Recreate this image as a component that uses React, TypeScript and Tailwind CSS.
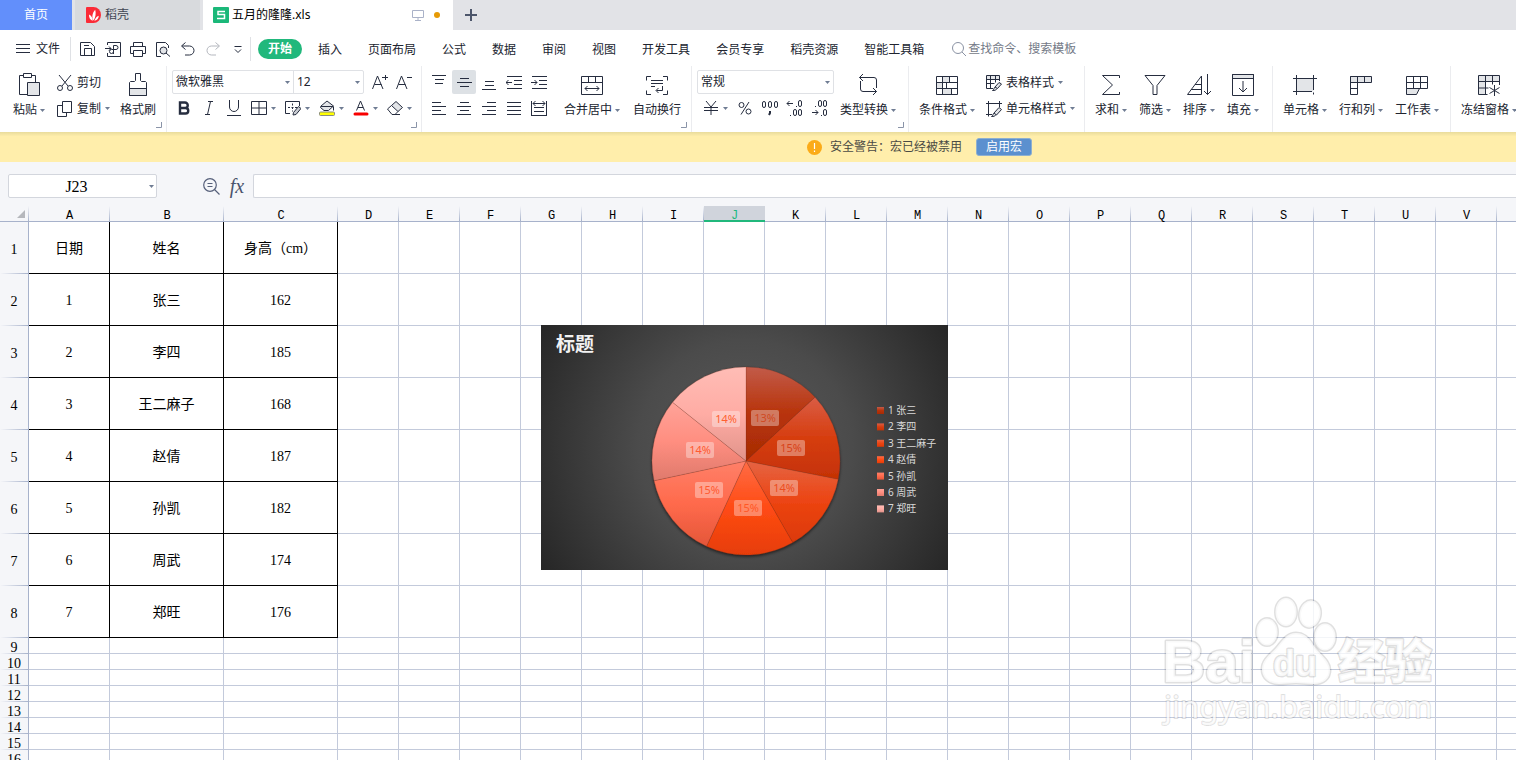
import type { ReactNode } from "react";
import clsx from "clsx";

const INK = "#262d3f";
const SHADE = "#e3e5e8";

function Icon({
  w = 16,
  h = 16,
  color = INK,
  children,
}: {
  w?: number;
  h?: number;
  color?: string;
  children: ReactNode;
}) {
  return (
    <svg
      width={w}
      height={h}
      viewBox={`0 0 ${w} ${h}`}
      fill="none"
      stroke={color}
      className="shrink-0"
      aria-hidden="true"
    >
      {children}
    </svg>
  );
}

function Caret() {
  return (
    <svg width="5" height="3" viewBox="0 0 5 3" className="shrink-0" aria-hidden="true">
      <path d="M0 0h5L2.5 3z" fill="#6f7c93" />
    </svg>
  );
}

function BigButton({
  label,
  icon,
  caret = true,
  className,
}: {
  label: string;
  icon: ReactNode;
  caret?: boolean;
  className: string;
}) {
  return (
    <button className={clsx("flex shrink-0 flex-col items-center whitespace-nowrap", className)}>
      <span className="flex h-7 items-center">
        <Icon w={24} h={24}>
          {icon}
        </Icon>
      </span>
      <span className="flex h-6 items-center gap-[3px]">
        {label}
        {caret && <Caret />}
      </span>
    </button>
  );
}

function Tool({
  label,
  active,
  className,
  children,
}: {
  label: string;
  active?: boolean;
  className: string;
  children: ReactNode;
}) {
  return (
    <button
      aria-label={label}
      className={clsx(
        "flex h-6 shrink-0 items-center justify-center rounded-xs",
        active && "bg-[#dde1e5]",
        className
      )}
    >
      {children}
    </button>
  );
}

function DropTool({ label, children }: { label: string; children: ReactNode }) {
  return (
    <button aria-label={label} className="flex h-6 w-[34px] shrink-0 items-center gap-1 pl-1">
      {children}
      <Caret />
    </button>
  );
}

function TextTool({ label, icon, caret }: { label: string; icon: ReactNode; caret?: boolean }) {
  return (
    <button className="flex h-6 items-center gap-1 pt-px whitespace-nowrap">
      <Icon>{icon}</Icon>
      {label}
      {caret && <Caret />}
    </button>
  );
}

function Group({
  corner,
  className,
  children,
}: {
  corner?: boolean;
  className: string;
  children: ReactNode;
}) {
  return (
    <div className={clsx("relative flex shrink-0 border-r border-[#ebecef] pt-1", className)}>
      {children}
      {corner && (
        <svg width="6" height="6" className="absolute right-1 bottom-1" aria-hidden="true">
          <path d="M5.5 0v5.5H0" fill="none" stroke="#8a94a8" />
        </svg>
      )}
    </div>
  );
}

function SelectBox({
  label,
  options,
  className,
}: {
  label: string;
  options: string[];
  className: string;
}) {
  return (
    <span className={clsx("relative flex items-center", className)}>
      <select
        aria-label={label}
        className="h-full w-full appearance-none bg-transparent pl-[3px] outline-none"
      >
        {options.map((o) => (
          <option key={o}>{o}</option>
        ))}
      </select>
      <span className="pointer-events-none absolute right-[3px]">
        <Caret />
      </span>
    </span>
  );
}

function TabBar() {
  return (
    <div className="flex h-[30px] shrink-0 bg-[#e2e3e7]">
      <button className="w-[72px] bg-[#628ffb] text-white">首页</button>
      <button className="ml-[3px] flex w-[125px] items-center gap-1 bg-[#d8dadd] pl-[11px] text-[#3f4552]">
        <svg width="15" height="16" viewBox="0 0 15 16" aria-hidden="true">
          <path d="M1 0h6.5a7.5 8 0 0 1 0 16H1a1 1 0 0 1-1-1V1a1 1 0 0 1 1-1z" fill="#fb2b37" />
          <path
            d="M7.5 13.5C5.6 10.5 6.2 6 9.2 2.8c1 3.6.5 7.8-1.7 10.7zM6.8 13.7C4.400 13.200 2.800 11 3 7.600c2.400 1.200 3.700 3.400 3.800 6.100zM8.300 13.800c1-1.800 2-4.300 4.500-5-.2 2.900-1.900 4.800-4.500 5z"
            fill="#fff"
          />
        </svg>
        稻壳
      </button>
      <div className="ml-[3px] flex w-[250px] items-center bg-white pl-[10px] text-black">
        <svg width="16" height="16" viewBox="0 0 16 16" aria-hidden="true">
          <rect width="16" height="16" rx="1" fill="#1bb879" />
          <path d="M12 4.500H5v3h6.500v4H4" fill="none" stroke="#fff" strokeWidth="1.500" />
        </svg>
        <span className="ml-[3px] grow">五月的隆隆.xls</span>
        <Icon w={12} h={12} color="#aab2c8">
          <path d="M.5 1.500h11v7H.500zM6 8.500v3M3 11.500h6" />
        </Icon>
        <span className="mr-[13px] ml-[10px] size-[6px] rounded-full bg-[#e69a05]" />
      </div>
      <button aria-label="新建" className="flex w-9 items-center justify-center">
        <Icon w={12} h={12} color="#4d566b">
          <path d="M6 0v12M0 6h12" strokeWidth="2" />
        </Icon>
      </button>
    </div>
  );
}

const MENUS = [
  "插入",
  "页面布局",
  "公式",
  "数据",
  "审阅",
  "视图",
  "开发工具",
  "会员专享",
  "稻壳资源",
  "智能工具箱",
];

const QUICK: { label: string; icon: ReactNode; color?: string }[] = [
  {
    label: "保存",
    icon: <path d="M.5 1.500h10l4 4v9H.500zM4.500 14v-6.500h7V14M4 4.500h5" />,
  },
  {
    label: "输出为PDF",
    icon: (
      <path d="M2.500 4V1.500h13v14h-13V12M0 7.500h6M4 5.500l2 2-2 2M8.500 13V4.500h2.500a2 2 0 0 1 0 4H6.500a2 2 0 1 0 2 2" />
    ),
  },
  {
    label: "打印",
    icon: <path d="M3.500 5V1.500h9V5M3.500 12.500h-3v-7h15v7h-3M3.500 9.500h9v6h-9z" />,
  },
  {
    label: "打印预览",
    icon: (
      <>
        <path d="M6 15.500H1.500v-14h9l3 3V7" />
        <circle cx="8.500" cy="9.500" r="3.500" fill={SHADE} />
        <path d="M11 12l4 3.500" />
      </>
    ),
  },
  { label: "撤销", icon: <path d="M5.500 1.500l-4 3.500 4 3.500M2 5h7.500a4.500 4.500 0 0 1 0 9H5" /> },
  {
    label: "恢复",
    color: "#b4b7be",
    icon: <path d="M10.500 1.500l4 3.500-4 3.500M14 5H6.500a4.500 4.500 0 0 0 0 9H11" />,
  },
  { label: "更多", icon: <path d="M4.500 5.500h7M5 8.500l3 3 3-3" /> },
];

function MenuBar() {
  return (
    <div className="flex h-9 shrink-0 items-center pt-px whitespace-nowrap">
      <button className="flex items-center gap-[6px] pl-4">
        <Icon w={14} h={10}>
          <path d="M0 .5h14M0 4.500h14M0 8.500h14" />
        </Icon>
        文件
      </button>
      <div className="ml-[10px] flex items-center border-x border-[#dfe1e5] py-1 pl-1">
        {QUICK.map((q) => (
          <button key={q.label} aria-label={q.label} className="flex w-[25px] justify-center">
            <Icon color={q.color}>{q.icon}</Icon>
          </button>
        ))}
      </div>
      <button className="ml-[7px] h-5 w-11 rounded-full bg-[#21b87c] font-bold text-white">
        开始
      </button>
      <nav className="ml-4 flex gap-[26px] pt-[2px]">
        {MENUS.map((m) => (
          <button key={m}>{m}</button>
        ))}
      </nav>
      <label className="ml-7 flex items-center gap-[2px] pt-px">
        <Icon w={14} h={14} color="#8a92a3">
          <circle cx="6" cy="6" r="5.500" />
          <path d="M10 10l4 4" />
        </Icon>
        <input
          aria-label="搜索"
          placeholder="查找命令、搜索模板"
          className="w-32 outline-none placeholder:text-[#747a87]"
        />
      </label>
    </div>
  );
}

const ALIGN_TOP = [
  { label: "顶端对齐", d: "M1 1.500h14M4 5.500h9M4 9.500h8" },
  { label: "垂直居中", d: "M4 4.500h9M1 8.500h15M4 12.500h9" },
  { label: "底端对齐", d: "M4 7.500h9M4 11.500h9M1 15.500h14" },
  { label: "减少缩进", d: "M1 2.500h15M8 6.500h8M8 10.500h8M1 14.500h15M0 8.500h6M2.500 6L0 8.500 2.500 11" },
  { label: "增加缩进", d: "M1 2.500h15M8 6.500h8M8 10.500h8M1 14.500h15M0 8.500h6M3.500 6L6 8.500 3.500 11" },
];

const ALIGN_BOTTOM = [
  { label: "左对齐", d: "M1 2.500h9M1 6.500h14M1 10.500h9M1 14.500h14" },
  { label: "水平居中", d: "M4 2.500h9M1 6.500h14M4 10.500h9M1 14.500h14" },
  { label: "右对齐", d: "M6 2.500h9M1 6.500h14M6 10.500h9M1 14.500h14" },
  { label: "两端对齐", d: "M1 2.500h14M1 6.500h14M1 10.500h14M1 14.500h14" },
  {
    label: "分散对齐",
    d: "M.5 1v15M15.500 1v15M2 3.500h12M4.500 1L2 3.500 4.500 6M11.500 1L14 3.500 11.500 6M3 7.500h10M3 11.500h10M1 15.500h14",
  },
];

function Ribbon() {
  return (
    <div className="flex h-[66px] shrink-0 overflow-hidden">
      <Group corner className="w-[167px] pl-2">
        <BigButton
          label="粘贴"
          className="w-[42px]"
          icon={
            <>
              <path d="M10 22.500H2.500v-19h4M14 3.500h4.500V10M6.500 5.500v-4h8v4z" />
              <path d="M10.500 10.500h12v13h-12z" fill={SHADE} />
            </>
          }
        />
        <div className="ml-[7px] flex w-[61px] shrink-0 flex-col gap-[2px]">
          <TextTool
            label="剪切"
            icon={
              <>
                <path d="M2 0l9 11M14 0L5 11" />
                <circle cx="3" cy="13" r="2.500" />
                <circle cx="13" cy="13" r="2.500" />
              </>
            }
          />
          <TextTool
            label="复制"
            caret
            icon={<path d="M5.500.5h9v11h-9zM5 4.500H.500v11h9V12" />}
          />
        </div>
        <BigButton
          label="格式刷"
          caret={false}
          className="w-10"
          icon={
            <>
              <path d="M3.500 16.500h17v7h-17z" fill={SHADE} />
              <path d="M9.500 1.500h5v7l1 1h4l1 1v13h-17v-13l1-1h4l1-1z" />
            </>
          }
        />
      </Group>

      <Group corner className="w-[255px] flex-col gap-[2px] pl-[5px]">
        <div className="flex">
          <div className="flex h-6 w-48 shrink-0 rounded-xs border border-[#dfe1e5]">
            <SelectBox label="字体" options={["微软雅黑", "宋体"]} className="w-[121px] border-r border-[#dfe1e5]" />
            <SelectBox label="字号" options={["12", "14"]} className="grow text-xs" />
          </div>
          <Tool label="增大字号" className="ml-1 w-6">
            <Icon>
              <path d="M.5 15L5.500 2 11 15M2.500 10.500h7M10 3.500h6M13.500 1v5" />
            </Icon>
          </Tool>
          <Tool label="减小字号" className="w-6">
            <Icon>
              <path d="M.5 15L5.500 2 11 15M2.500 10.500h7M11 3.500h5" />
            </Icon>
          </Tool>
        </div>
        <div className="flex">
          <Tool label="加粗" className="w-6">
            <Icon w={12} h={14}>
              <path d="M2 1.500h5a2.500 2.500 0 0 1 0 5.500H2zM2 7h5.500a2.700 2.700 0 0 1 0 5.500H2z" strokeWidth="2.400" />
            </Icon>
          </Tool>
          <Tool label="倾斜" className="w-[25px]">
            <Icon w={10} h={14}>
              <path d="M4 .5h5M1 13.500h5M6.500.5l-3 13" />
            </Icon>
          </Tool>
          <Tool label="下划线" className="w-[26px]">
            <Icon>
              <path d="M3.500 0v7a4.500 4.500 0 0 0 9 0V0M1 15.500h14" />
            </Icon>
          </Tool>
          <DropTool label="边框">
            <Icon>
              <path d="M.5 1.500h15v13H.500zM8 1.500v13M.5 8h15" />
            </Icon>
          </DropTool>
          <DropTool label="绘图边框">
            <Icon>
              <path d="M5 13.500H.500v-12h14V6M7.500 3.500v2M7.500 7v2M7.500 10.500v1M3 7.500h2M6.500 7.500h2M10 7.500h2" />
              <path d="M8.500 12.500l5-6 2.500 2-5 6-3 .5z" fill="#c9ccd2" />
            </Icon>
          </DropTool>
          <DropTool label="填充颜色">
            <Icon>
              <path d="M2 6l6-5 6.500 5-5 4.500H5L1.500 7.500z" fill={SHADE} />
              <path d="M2 6.500h12M14.500 6.500v4" />
              <rect x=".5" y="12" width="15" height="3.500" rx="1" fill="#ff0" stroke="#8a8d80" />
            </Icon>
          </DropTool>
          <DropTool label="字体颜色">
            <Icon>
              <path d="M3.500 10.500L7.500 1l4 9.500M5 7.500h5" />
              <path d="M2 14h12" stroke="#f80000" strokeWidth="3" strokeLinecap="round" />
            </Icon>
          </DropTool>
          <DropTool label="清除">
            <Icon>
              <path d="M4.500 5.500L9 1.500l6.500 6-4.500 4z" fill={SHADE} />
              <path d="M4.500 5.500L.500 9l4.500 5.500h3l3-3M5 14.500h8" />
            </Icon>
          </DropTool>
        </div>
      </Group>

      <Group corner className="w-[270px] pl-[5px]">
        <div className="flex shrink-0 flex-col gap-[2px]">
          <div className="flex gap-px">
            {ALIGN_TOP.map((a) => (
              <Tool key={a.label} label={a.label} active={a.label === "垂直居中"} className="w-6">
                <Icon w={16} h={17}>
                  <path d={a.d} />
                </Icon>
              </Tool>
            ))}
          </div>
          <div className="flex gap-px">
            {ALIGN_BOTTOM.map((a) => (
              <Tool key={a.label} label={a.label} className="w-6">
                <Icon w={16} h={17}>
                  <path d={a.d} />
                </Icon>
              </Tool>
            ))}
          </div>
        </div>
        <BigButton
          label="合并居中"
          className="ml-2 w-[66px]"
          icon={
            <path d="M1.500 4.500h21v18h-21zM1.500 10.500h21M8.500 4.500v6M15.500 4.500v6M5 16.500h14M7.500 14L5 16.500 7.500 19M16.500 14l2.500 2.500-2.500 2.500" />
          }
        />
        <BigButton
          label="自动换行"
          caret={false}
          className="w-16"
          icon={
            <path d="M1.500 8.500v-4H6M18 4.500h4.500v4M1.500 18.500v4H6M18 22.500h4.500v-4M6 8.500h12M6 11.500h12M6 14.500h4M17.500 14v4.500h-6M13.500 16l-2.500 2.500 2.500 2.500" />
          }
        />
      </Group>

      <Group corner className="w-[217px] pl-[5px]">
        <div className="flex w-[137px] shrink-0 flex-col gap-[2px]">
          <div className="flex h-6 rounded-xs border border-[#dfe1e5]">
            <SelectBox label="数字格式" options={["常规", "数值"]} className="grow" />
          </div>
          <div className="flex">
            <button aria-label="货币" className="flex h-6 w-[35px] items-center gap-1 pl-[6px]">
              <Icon>
                <path d="M3 1l5 6 5-6M1 7.500h14M1 10.500h14M8 7v8" />
              </Icon>
              <Caret />
            </button>
            <Tool label="百分比" className="w-[25px]">
              <Icon w={14} h={14}>
                <circle cx="3.500" cy="4" r="2.500" />
                <circle cx="10.500" cy="10.500" r="2.500" />
                <path d="M11 1L3 13.500" />
              </Icon>
            </Tool>
            <Tool label="千位分隔" className="w-[25px]">
              <Icon w={18} h={16}>
                <rect x="1.500" y="1.500" width="3" height="6" rx="1.500" />
                <rect x="7.500" y="1.500" width="3" height="6" rx="1.500" />
                <rect x="13.500" y="1.500" width="3" height="6" rx="1.500" />
                <path d="M9 11v2l-1 2" strokeWidth="2" />
              </Icon>
            </Tool>
            <Tool label="增加小数位" className="w-[25px]">
              <Icon w={18} h={18}>
                <path d="M1 4.500h6M3.500 2L1 4.500 3.500 7M10 7.500h1M4 16.500h1" />
                <rect x="12.500" y="1.500" width="3" height="6" rx="1.500" />
                <rect x="7.500" y="10.500" width="3" height="6" rx="1.500" />
                <rect x="12.500" y="10.500" width="3" height="6" rx="1.500" />
              </Icon>
            </Tool>
            <Tool label="减少小数位" className="w-[25px]">
              <Icon w={18} h={18}>
                <path d="M1 13.500h6M4.500 11L7 13.500 4.500 16M10 16.500h1M4 7.500h1" />
                <rect x="7.500" y="1.500" width="3" height="6" rx="1.500" />
                <rect x="12.500" y="1.500" width="3" height="6" rx="1.500" />
                <rect x="12.500" y="10.500" width="3" height="6" rx="1.500" />
              </Icon>
            </Tool>
          </div>
        </div>
        <BigButton
          label="类型转换"
          className="ml-1 w-[60px]"
          icon={
            <path d="M20.500 16V8a2.500 2.500 0 0 0-2.500-2.500H3.500M7 2L3.500 5.500 7 9M4.500 9v8A2.500 2.500 0 0 0 7 19.500h13.500M17 16l3.500 3.500L17 23" />
          }
        />
      </Group>

      <Group className="w-44">
        <BigButton
          label="条件格式"
          className="w-[76px]"
          icon={
            <>
              <path d="M7 5h7v5H7zM2 10h6v6H2zM7 16h9v6H7z" fill={SHADE} stroke="none" />
              <path d="M1.500 4.500h21v18h-21zM1.500 10.500h21M1.500 16.500h21M7.500 4.500v18M14.500 4.500v6M11.500 10.500v6M16.500 16.500v6" />
            </>
          }
        />
        <div className="flex shrink-0 flex-col gap-[2px] pl-px">
          <TextTool
            label="表格样式"
            caret
            icon={
              <>
                <path d="M1 1h13v3H1z" fill={SHADE} stroke="none" />
                <path d="M7 13.500H.500V.500h13V6M.5 4.500h13M.5 8.500h8M4.500.5v13M9.500.5v7" />
                <path d="M9 12l4-4.500 2.500 1.500-4 4.500zM9 12c-1 1-1 2.500-2.500 3.500 2 .2 4-.500 4.500-2" fill={SHADE} />
              </>
            }
          />
          <TextTool
            label="单元格样式"
            caret
            icon={
              <>
                <path d="M0 2.500h16M2.500 0v15.500M0 13.500h6M13.500 0v6" />
                <path d="M8 12l5-5.500L15.500 8.500l-5 5.500zM8 12c-1 1-1 2.500-2.500 3.500 2 .2 4-.500 4.500-2" fill={SHADE} />
              </>
            }
          />
        </div>
      </Group>

      <Group className="w-[188px] pl-1">
        <BigButton label="求和" className="w-11" icon={<path d="M20.500 6V3.500h-17l10 9.500-10 9.500h17V20" />} />
        <BigButton label="筛选" className="w-11" icon={<path d="M2 3.500h20l-8 10v9h-4v-9L2 3.500z" />} />
        <BigButton
          label="排序"
          className="w-11"
          icon={<path d="M.5 22.500L14.500 4v18.500zM4 17.500h10M8 12.500h6M20.500 2v20.500M17 19l3.500 3.500L24 19" />}
        />
        <BigButton
          label="填充"
          className="w-11"
          icon={
            <>
              <path d="M1.500 2.500h21v4h-21z" fill={SHADE} />
              <path d="M1.500 2.500h21v21h-21zM12 9v11M8 16l4 4 4-4" />
            </>
          }
        />
      </Group>

      <Group className="w-[178px] pl-1">
        <BigButton
          label="单元格"
          className="w-14"
          icon={
            <>
              <path d="M3.500 6.500h17v13h-17z" fill={SHADE} stroke="none" />
              <path d="M0 6.500h24M0 19.500h19M3.500 3v20M20.500 3v15M20.500 20.500v2" />
            </>
          }
        />
        <BigButton
          label="行和列"
          className="w-14"
          icon={
            <>
              <path d="M1.500 4.500h21v6h-21z" fill={SHADE} />
              <path d="M8.500 4.500v18h-7v-18M15.500 4.500v6M1.500 16.500h7" />
            </>
          }
        />
        <BigButton
          label="工作表"
          className="w-14"
          icon={
            <>
              <path d="M1.500 16.500h13l-3 6h-10z" fill={SHADE} />
              <path d="M1.500 16.500v-12h21v12zM1.500 10.500h21M8.500 4.500v12M15.500 4.500v12" />
            </>
          }
        />
      </Group>

      <BigButton
        label="冻结窗格"
        className="w-[76px] pt-1"
        icon={
          <>
            <path d="M1.500 3.500h21v6h-14v13h-7z" fill={SHADE} stroke="none" />
            <path d="M22.500 13V3.500h-21v19h9M1.500 9.500h21M1.500 16h10M8.500 3.500v19M15.500 3.500v9M17.500 13v11M12.500 15.500l10 6M22.500 15.500l-10 6" />
          </>
        }
      />
    </div>
  );
}

function WarningBar() {
  return (
    <div className="flex h-[30px] shrink-0 items-center bg-[#ffeeab] bg-linear-to-b from-[#e9dc9c] to-[#ffeeab] to-15% pl-[807px] whitespace-nowrap text-[#4a4a44]">
      <svg width="15" height="15" viewBox="0 0 15 15" aria-hidden="true">
        <circle cx="7.500" cy="7.500" r="7.500" fill="#fbab18" />
        <path d="M7.500 3v6M7.500 10.500v1.500" stroke="#fff" strokeWidth="1.200" />
      </svg>
      <span className="ml-2">安全警告：宏已经被禁用</span>
      <button className="ml-[14px] flex h-[18px] w-14 items-center justify-center rounded-[3px] border border-[#8fb0cf] bg-[#5b90cf] text-white">
        启用宏
      </button>
    </div>
  );
}

function FormulaBar() {
  return (
    <div className="flex h-11 shrink-0 items-center bg-[#f5f6f9] pl-2 pt-1">
      <div className="relative flex h-6 w-[149px] items-center rounded-xs border border-[#d3d6dd] bg-white">
        <input
          aria-label="名称框"
          defaultValue="J23"
          className="w-[135px] pt-[2px] text-center font-['Liberation_Serif',serif] text-base leading-5 text-black outline-none"
        />
        <span className="absolute right-[2px]">
          <Caret />
        </span>
      </div>
      <button aria-label="查找" className="ml-[46px]">
        <Icon w={17} h={17} color="#56607a">
          <circle cx="7" cy="7" r="6.300" strokeWidth="1.200" />
          <path d="M11.500 11.500l5 5M4.500 5.500h5M4.500 8.500h5" strokeWidth="1.200" />
        </Icon>
      </button>
      <button
        aria-label="插入函数"
        className="ml-[9px] w-4 font-['Liberation_Serif',serif] text-xl leading-5 text-[#4a546c] italic"
      >
        fx
      </button>
      <input
        aria-label="编辑栏"
        className="ml-2 h-6 grow rounded-l-xs border border-r-0 border-[#d3d6dd] bg-white outline-none"
      />
    </div>
  );
}

const COLUMNS = "ABCDEFGHIJKLMNOPQRSTUVW".split("");

const DATA = [
  ["日期", "姓名", "身高（cm）"],
  ["1", "张三", "162"],
  ["2", "李四", "185"],
  ["3", "王二麻子", "168"],
  ["4", "赵倩", "187"],
  ["5", "孙凯", "182"],
  ["6", "周武", "174"],
  ["7", "郑旺", "176"],
];

const SELECTED = "J";

function Sheet() {
  return (
    <table className="w-[1558px] table-fixed border-separate border-spacing-0 text-center text-sm text-black">
      <colgroup>
        <col className="w-[29px]" />
        {COLUMNS.map((c) => (
          <col
            key={c}
            className={clsx(c === "A" ? "w-[81px]" : c === "B" || c === "C" ? "w-[114px]" : "w-[61px]")}
          />
        ))}
      </colgroup>
      <thead className="font-['Liberation_Mono',monospace] text-xs">
        <tr>
          <th className="border-b border-[#a7b2cb] bg-[#f5f6f9] bg-[linear-gradient(to_bottom,transparent,#a7b2cb)] bg-[length:1px_100%] bg-right bg-no-repeat p-0">
            <svg width="8" height="8" className="ml-[17px]" aria-hidden="true">
              <path d="M8 0v8H0z" fill="#b5b7bc" />
            </svg>
          </th>
          {COLUMNS.map((c) => (
            <th
              key={c}
              scope="col"
              className={clsx(
                "h-4 border-b p-0 pt-[5px] leading-[10px] font-normal",
                c === SELECTED
                  ? "border-[#21b87c] bg-[#d0d4dc] text-[#21b87c] shadow-[inset_0_-1px_#21b87c]"
                  : "border-[#a7b2cb] bg-[#f5f6f9] bg-[linear-gradient(to_bottom,transparent,#a7b2cb)] bg-[length:1px_100%] bg-right bg-no-repeat"
              )}
            >
              {c}
            </th>
          ))}
        </tr>
      </thead>
      <tbody>
        {Array.from({ length: 16 }, (_, r) => (
          <tr key={r} className={r < DATA.length ? "h-[52px]" : "h-4"}>
            <th
              scope="row"
              className="border-r border-[#a7b2cb] bg-[#f5f6f9] bg-[linear-gradient(to_right,transparent,#a7b2cb)] bg-[length:100%_1px] bg-bottom bg-no-repeat p-0 pt-[3px] font-['Liberation_Serif',serif] leading-[13px] font-normal"
            >
              {r + 1}
            </th>
            {COLUMNS.map((c, i) => (
              <td
                key={c}
                className={clsx(
                  "border-r border-b p-0 pt-[2px] font-['Liberation_Serif','Noto_Sans_CJK_SC',serif] leading-[13px]",
                  r < DATA.length && i < 3 ? "border-black" : "border-[#c3cadb]"
                )}
              >
                {DATA[r]?.[i]}
              </td>
            ))}
          </tr>
        ))}
      </tbody>
    </table>
  );
}

// label x/y are the centres of the percentage tags
const SLICES = [
  { name: "1 张三", value: 162, pct: "13%", x: 224, y: 93, colors: ["#c25b49", "#b8330a", "#a62b04"], text: "#cf4a22" },
  { name: "2 李四", value: 185, pct: "15%", x: 250, y: 123, colors: ["#da5d45", "#d63d0f", "#c43205"], text: "#d8431a" },
  { name: "3 王二麻子", value: 168, pct: "14%", x: 243, y: 163, colors: ["#e56443", "#ec4412", "#dc3906"], text: "#ec4c1e" },
  { name: "4 赵倩", value: 187, pct: "15%", x: 207, y: 183, colors: ["#ff6c45", "#ff4b14", "#e63d06"], text: "#ff5826" },
  { name: "5 孙凯", value: 182, pct: "15%", x: 168, y: 165, colors: ["#ff8069", "#ff6a4c", "#e45639"], text: "#ff5a30" },
  { name: "6 周武", value: 174, pct: "14%", x: 159, y: 125, colors: ["#ffa399", "#ff8e80", "#df7a6c"], text: "#ff5a30" },
  { name: "7 郑旺", value: 176, pct: "14%", x: 185, y: 94, colors: ["#ffbdb6", "#ffaca4", "#e0938a"], text: "#ff6030" },
];

function PieChart() {
  const cx = 205;
  const cy = 136;
  const radius = 94;
  const total = SLICES.reduce((sum, s) => sum + s.value, 0);
  let angle = -Math.PI / 2;

  const paths = SLICES.map((s) => {
    const end = angle + (s.value / total) * Math.PI * 2;
    const d = `M${cx} ${cy}L${cx + radius * Math.cos(angle)} ${cy + radius * Math.sin(angle)}A${radius} ${radius} 0 0 1 ${cx + radius * Math.cos(end)} ${cy + radius * Math.sin(end)}Z`;
    angle = end;
    return d;
  });

  return (
    <svg
      width="407"
      height="245"
      viewBox="0 0 407 245"
      role="img"
      aria-label="标题"
      className="absolute top-[119px] left-[541px] font-['Noto_Sans','Noto_Sans_CJK_SC',sans-serif]"
    >
      <defs>
        <radialGradient id="backdrop" gradientUnits="userSpaceOnUse" cx="204" cy="122" r="238">
          <stop offset="0" stopColor="#5a5a5a" />
          <stop offset=".45" stopColor="#4b4b4b" />
          <stop offset="1" stopColor="#262626" />
        </radialGradient>
        {SLICES.map((s, i) => (
          <linearGradient key={s.name} id={`slice-${i}`} x1="0" y1="0" x2="0" y2="1">
            <stop offset="0" stopColor={s.colors[0]} />
            <stop offset=".5" stopColor={s.colors[1]} />
            <stop offset="1" stopColor={s.colors[2]} />
          </linearGradient>
        ))}
        <filter id="pie-shadow" x="-10%" y="-10%" width="120%" height="120%">
          <feDropShadow dx="0" dy="1.500" stdDeviation="1.500" floodOpacity=".6" />
        </filter>
      </defs>
      <rect width="407" height="245" fill="url(#backdrop)" />
      <text x="15" y="26" fontSize="19" fontWeight="bold" fill="#f2f2f2">
        标题
      </text>
      <g filter="url(#pie-shadow)">
        {paths.map((d, i) => (
          <path key={i} d={d} fill={`url(#slice-${i})`} stroke="#7a2a18" strokeOpacity=".35" strokeWidth=".6" />
        ))}
      </g>
      {SLICES.map((s, i) => (
        <g key={s.name}>
          <rect x={s.x - 14} y={s.y - 8} width="28" height="16" rx="2" fill="#fff" fillOpacity=".35" />
          <text x={s.x} y={s.y + 4} fontSize="11" textAnchor="middle" fill={s.text}>
            {s.pct}
          </text>
          <rect x="336" y={82 + i * 16.4} width="7" height="7" fill={`url(#slice-${i})`} />
          <text x="347" y={89 + i * 16.4} fontSize="10" fill="#d9d9d9">
            {s.name}
          </text>
        </g>
      ))}
    </svg>
  );
}

function Watermark() {
  return (
    <svg
      width="290"
      height="140"
      viewBox="0 0 290 140"
      className="pointer-events-none absolute top-[389px] left-[1156px]"
      fill="#fff"
      fillOpacity=".8"
      stroke="#000"
      strokeOpacity=".12"
      strokeWidth="3"
      strokeLinejoin="round"
      paintOrder="stroke"
      aria-hidden="true"
    >
      <text x="6" y="87" fontSize="60" fontWeight="bold" fontFamily="Liberation Sans, sans-serif">
        Bai
      </text>
      <ellipse cx="111" cy="37" rx="10.500" ry="13.500" />
      <ellipse cx="130" cy="17" rx="10.500" ry="14" />
      <ellipse cx="154" cy="19" rx="10.500" ry="13.500" transform="rotate(10 154 19)" />
      <ellipse cx="169" cy="42" rx="10.500" ry="13.500" />
      <path d="M140 38c9 0 14 6 18 13s16 14 16 24c0 9-7 14-16 14-7 0-12-1-18-1s-11 1-17 1c-10 0-17-6-17-15 0-10 10-16 15-22s10-14 19-14z" />
      <text x="117" y="81" fontSize="36" fontFamily="Liberation Sans, sans-serif" fontWeight="bold">
        du
      </text>
      <text x="182" y="83" fontSize="47" fontWeight="900" fontFamily="Noto Sans CJK SC, sans-serif">
        经验
      </text>
      <text x="8" y="123" fontSize="31" fontFamily="Noto Sans, sans-serif" strokeWidth="2">
        jingyan.baidu.com
      </text>
    </svg>
  );
}

export default function App() {
  return (
    <div className="flex h-screen flex-col overflow-hidden bg-white font-['Noto_Sans','Noto_Sans_CJK_SC',sans-serif] text-xs text-[#20242f]">
      <TabBar />
      <MenuBar />
      <Ribbon />
      <WarningBar />
      <FormulaBar />
      <main className="relative min-h-0 grow overflow-hidden">
        <Sheet />
        <PieChart />
        <Watermark />
      </main>
    </div>
  );
}
